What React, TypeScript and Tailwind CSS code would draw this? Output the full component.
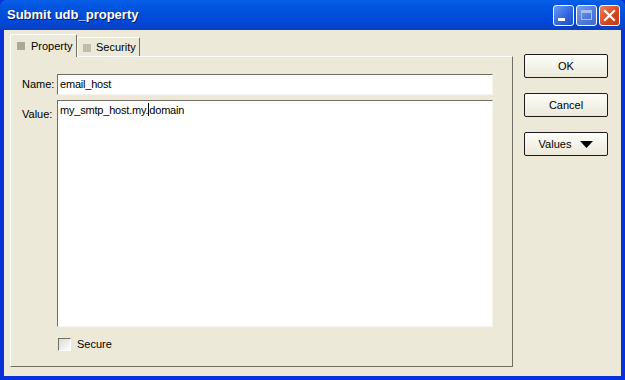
import React from "react";

function TitleButton({ kind }: { kind: "min" | "max" | "close" }) {
  const base =
    "flex h-[21px] w-[21px] items-center justify-center rounded-[3px] border border-white";
  if (kind === "close") {
    return (
      <div className={`${base} bg-[linear-gradient(135deg,#e9825f,#d6451c_60%,#c23a12)]`}>
        <svg width="13" height="13" viewBox="0 0 13 13">
          <path d="M2 2 L11 11 M11 2 L2 11" stroke="#fff" strokeWidth="2.2" strokeLinecap="square" />
        </svg>
      </div>
    );
  }
  if (kind === "min") {
    return (
      <div className={`${base} items-end bg-[linear-gradient(135deg,#6b9cf5,#2d63e0_60%,#1f4fc8)] pb-[4px]`}>
        <div className="ml-[-4px] h-[3px] w-[7px] bg-white" />
      </div>
    );
  }
  return (
    <div className={`${base} border-[#8fa8e8] bg-[linear-gradient(135deg,#7aa0ec,#4d78dc_60%,#3e69d0)]`}>
      <div className="h-[10px] w-[11px] border border-[#a9bdf0] border-t-[3px]" />
    </div>
  );
}

function Button({ children }: { children: React.ReactNode }) {
  return (
    <div className="flex h-[24px] w-[84px] items-center justify-center rounded-[2px] border border-[#1c1c1c] bg-[linear-gradient(#fdfdfb,#ece9d8)] text-[11px] text-black">
      {children}
    </div>
  );
}

export default function App() {
  return (
    <div
      className="flex h-[380px] w-[625px] flex-col bg-[#0831d9] text-black"
      style={{ fontFamily: "'Liberation Sans', Arial, sans-serif" }}
    >
      {/* title bar */}
      <div className="flex h-[30px] items-center justify-between rounded-t-[6px] bg-[linear-gradient(#0a5fe8,#0056e0_20%,#0049d8_70%,#0a3fc0)] pl-[7px] pr-[5px]">
        <span className="text-[13px] font-bold text-white [text-shadow:1px_1px_0_#0a1c6a]">
          Submit udb_property
        </span>
        <div className="flex gap-[2px]">
          <TitleButton kind="min" />
          <TitleButton kind="max" />
          <TitleButton kind="close" />
        </div>
      </div>

      {/* body */}
      <div className="mx-[4px] mb-[4px] flex flex-1 gap-[11px] bg-[#ece9d8] pl-[6px] pt-[4px]">
        <div className="flex flex-col">
          {/* tabs */}
          <div className="flex h-[22px] items-end">
            <div className="relative z-10 mb-[-1px] flex h-[23px] w-[67px] items-center gap-[6px] rounded-t-[2px] border border-b-0 border-white border-r-[#716f64] bg-[#ece9d8] pl-[6px]">
              <div className="h-[8px] w-[8px] bg-[#aca899]" />
              <span className="text-[11px]">Property</span>
            </div>
            <div className="flex h-[19px] w-[63px] items-center gap-[5px] rounded-t-[2px] border border-b-0 border-white border-r-[#716f64] bg-[#ece9d8] pl-[5px] pt-[1px]">
              <div className="h-[8px] w-[8px] bg-[#c0bdb0]" />
              <span className="text-[11px]">Security</span>
            </div>
          </div>

          {/* panel */}
          <div className="flex h-[311px] w-[503px] flex-col border border-white border-b-[#716f64] border-r-[#716f64] pl-[11px] pt-[17px]">
            <div className="flex items-center">
              <span className="w-[35px] text-[11px]">Name:</span>
              <div className="flex h-[21px] w-[436px] items-center border border-[#f6f5ef] border-l-[#716f64] border-t-[#716f64] bg-white pl-[2px] text-[11px] tracking-[-0.2px]">
                email_host
              </div>
            </div>
            <div className="mt-[5px] flex">
              <span className="w-[35px] pt-[6px] text-[11px]">Value:</span>
              <div className="flex h-[227px] w-[436px] border border-[#f6f5ef] border-l-[#716f64] border-t-[#716f64] bg-white pl-[2px] pt-[1px] text-[11px] tracking-[-0.2px]">
                <span>my_smtp_host.my.</span>
                <span className="mt-[1px] inline-block h-[13px] w-px bg-black" />
                <span>domain</span>
              </div>
            </div>
            <div className="ml-[36px] mt-[9px] flex items-center gap-[6px]">
              <div className="h-[13px] w-[13px] border border-[#716f64] border-b-white border-r-white bg-[linear-gradient(135deg,#dcdad0,#fff)]" />
              <span className="text-[11px]">Secure</span>
            </div>
          </div>
        </div>

        {/* buttons */}
        <div className="flex flex-col gap-[15px] pt-[20px]">
          <Button>OK</Button>
          <Button>Cancel</Button>
          <Button>
            <span className="mr-[9px]">Values</span>
            <svg width="13" height="7" viewBox="0 0 13 7">
              <path d="M0 0 H13 L6.5 7 Z" fill="#000" />
            </svg>
          </Button>
        </div>
      </div>
    </div>
  );
}
